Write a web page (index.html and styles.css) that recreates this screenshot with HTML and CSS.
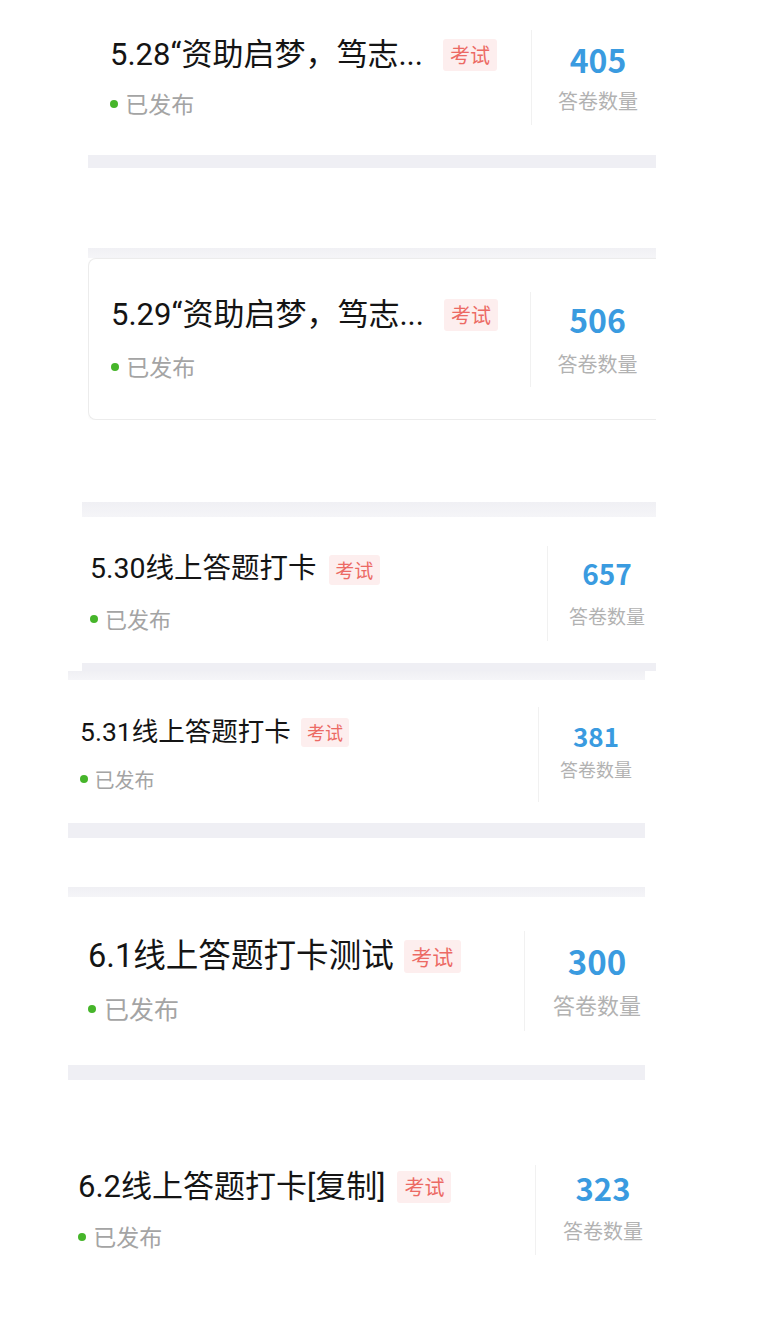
FILE: index.html
```html
<!DOCTYPE html>
<html lang="zh-CN">
<head>
    <meta charset="UTF-8">
    <meta name="viewport" content="width=device-width, initial-scale=1.0">
    <title>答卷统计</title>
    <link rel="stylesheet" href="styles.css">
</head>
<body>
    <main class="collage">
        <!-- 5.28 -->
        <section class="shot shot-1">
            <div class="card">
                <div class="info">
                    <div class="title-row">
                        <span class="title">5.28“资助启梦，笃志...</span>
                        <span class="tag">考试</span>
                    </div>
                    <div class="status"><i class="dot"></i>已发布</div>
                </div>
                <div class="stat">
                    <div class="stat-num">405</div>
                    <div class="stat-label">答卷数量</div>
                </div>
            </div>
            <div class="bar bar-bottom"></div>
        </section>

        <!-- 5.29 -->
        <section class="shot shot-2">
            <div class="bar bar-top"></div>
            <div class="card card-framed">
                <div class="info">
                    <div class="title-row">
                        <span class="title">5.29“资助启梦，笃志...</span>
                        <span class="tag">考试</span>
                    </div>
                    <div class="status"><i class="dot"></i>已发布</div>
                </div>
                <div class="stat">
                    <div class="stat-num">506</div>
                    <div class="stat-label">答卷数量</div>
                </div>
            </div>
        </section>

        <!-- 5.30 -->
        <section class="shot shot-3">
            <div class="bar bar-top"></div>
            <div class="card">
                <div class="info">
                    <div class="title-row">
                        <span class="title">5.30线上答题打卡</span>
                        <span class="tag">考试</span>
                    </div>
                    <div class="status"><i class="dot"></i>已发布</div>
                </div>
                <div class="stat">
                    <div class="stat-num">657</div>
                    <div class="stat-label">答卷数量</div>
                </div>
            </div>
            <div class="bar bar-bottom"></div>
        </section>

        <!-- 5.31 -->
        <section class="shot shot-4">
            <div class="bar bar-top"></div>
            <div class="card">
                <div class="info">
                    <div class="title-row">
                        <span class="title">5.31线上答题打卡</span>
                        <span class="tag">考试</span>
                    </div>
                    <div class="status"><i class="dot"></i>已发布</div>
                </div>
                <div class="stat">
                    <div class="stat-num">381</div>
                    <div class="stat-label">答卷数量</div>
                </div>
            </div>
            <div class="bar bar-bottom"></div>
        </section>

        <!-- 6.1 -->
        <section class="shot shot-5">
            <div class="bar bar-top"></div>
            <div class="card">
                <div class="info">
                    <div class="title-row">
                        <span class="title">6.1线上答题打卡测试</span>
                        <span class="tag">考试</span>
                    </div>
                    <div class="status"><i class="dot"></i>已发布</div>
                </div>
                <div class="stat">
                    <div class="stat-num">300</div>
                    <div class="stat-label">答卷数量</div>
                </div>
            </div>
            <div class="bar bar-bottom"></div>
        </section>

        <!-- 6.2 -->
        <section class="shot shot-6">
            <div class="card">
                <div class="info">
                    <div class="title-row">
                        <span class="title">6.2线上答题打卡[复制]</span>
                        <span class="tag">考试</span>
                    </div>
                    <div class="status"><i class="dot"></i>已发布</div>
                </div>
                <div class="stat">
                    <div class="stat-num">323</div>
                    <div class="stat-label">答卷数量</div>
                </div>
            </div>
        </section>
    </main>
</body>
</html>
```

FILE: styles.css
```css
* {
    margin: 0;
    padding: 0;
    box-sizing: border-box;
}

body {
    background: #ffffff;
    color: #1c1c1c;
    font-family: "Noto Sans CJK SC", "Noto Sans", sans-serif;
    width: 764px;
    min-height: 1343px;
    overflow: hidden;
}

.collage {
    display: flex;
    flex-direction: column;
}

/* Each screenshot strip has its own crop and scale */
.shot {
    margin-left: var(--left);
    width: var(--width);
    overflow: hidden;
}

.card {
    display: flex;
    align-items: center;
    height: var(--card-h);
    padding-left: var(--pad);
    padding-top: var(--pt, 0px);
    padding-bottom: var(--pb, 0px);
    background: #ffffff;
}

.card-framed {
    border: 1px solid #ececec;
    border-right: none;
    border-radius: 8px 0 0 8px;
    box-shadow: 0 1px 3px rgba(0, 0, 0, 0.04);
}

.info {
    flex: 1;
    display: flex;
    flex-direction: column;
    gap: var(--gap);
}

.title-row {
    display: flex;
    align-items: center;
    gap: var(--tag-gap);
}

.title {
    font-family: Roboto, "Noto Sans CJK SC", sans-serif;
    font-size: var(--title);
    line-height: 1.15;
    color: #141414;
    white-space: nowrap;
}

.tag {
    font-size: var(--tag);
    line-height: 1.6;
    padding: 0 0.35em;
    color: #ec6a64;
    background: #fdeeee;
    border-radius: 3px;
}

.status {
    display: flex;
    align-items: center;
    gap: 0.32em;
    font-size: var(--status);
    line-height: 1.25;
    color: #a4a4a4;
}

.dot {
    width: 8px;
    height: 8px;
    border-radius: 50%;
    background: #46b52a;
}

.stat {
    width: var(--stat-w);
    height: var(--div-h);
    padding-left: var(--stat-pad);
    padding-bottom: var(--stat-pb, 0px);
    border-left: 1px solid #f1f1f1;
    display: flex;
    flex-direction: column;
    align-items: center;
    justify-content: center;
    gap: var(--stat-gap);
}

.stat-num {
    font-size: var(--num);
    font-weight: bold;
    line-height: 1.1;
    color: #3a9be0;
}

.stat-label {
    font-size: var(--label);
    line-height: 1.2;
    color: #b2b2b2;
}

.bar {
    background: #efeff4;
}

.bar-top {
    height: var(--bar-top);
    background: linear-gradient(180deg, #f0f0f4, #f5f5f8);
}

.bar-bottom {
    height: var(--bar-bottom);
}

/* Strip settings */
.shot-1 {
    --left: 88px; --width: 568px; --card-h: 155px; --pad: 22px; --bar-bottom: 13px;
    --title: 31px; --tag: 20px; --tag-gap: 20px; --status: 23px; --gap: 17px;
    --num: 32px; --label: 20px; --stat-w: 125px; --stat-pad: 8px; --div-h: 95px; --stat-gap: 12px;
}

.shot-2 {
    --left: 88px; --width: 568px; --card-h: 162px; --pad: 22px; --bar-top: 10px;
    --title: 31px; --tag: 20px; --tag-gap: 20px; --status: 23px; --gap: 20px;
    --num: 32px; --label: 20px; --stat-w: 126px; --stat-pad: 8px; --div-h: 95px; --stat-gap: 14px;
    margin-top: 80px;
}

.shot-3 {
    --left: 82px; --width: 574px; --card-h: 146px; --pad: 8px; --bar-top: 15px; --bar-bottom: 8px;
    --title: 28.5px; --tag: 19px; --tag-gap: 12px; --status: 22px; --gap: 19px;
    --num: 28px; --label: 19px; --stat-w: 109px; --stat-pad: 10px; --div-h: 95px; --stat-gap: 16px;
    --pt: 6px;
    margin-top: 82px;
}

.shot-4 {
    --left: 68px; --width: 577px; --card-h: 143px; --pad: 12px; --bar-top: 9px; --bar-bottom: 15px;
    --title: 26.5px; --tag: 18px; --tag-gap: 10px; --status: 20px; --gap: 19px;
    --num: 26px; --label: 18px; --stat-w: 107px; --stat-pad: 8px; --div-h: 95px; --stat-gap: 8px;
    --pt: 6px; --stat-pb: 6px;
}

.shot-5 {
    --left: 68px; --width: 577px; --card-h: 168px; --pad: 20px; --bar-top: 10px; --bar-bottom: 15px;
    --title: 32.6px; --tag: 21px; --tag-gap: 10px; --status: 25px; --gap: 18px;
    --num: 33px; --label: 22px; --stat-w: 121px; --stat-pad: 24px; --div-h: 100px; --stat-gap: 12px;
    --stat-pb: 2px;
    margin-top: 49px;
}

.shot-6 {
    --left: 60px; --width: 600px; --card-h: 180px; --pad: 18px;
    --title: 31px; --tag: 20px; --tag-gap: 12px; --status: 23px; --gap: 18px;
    --num: 31px; --label: 20px; --stat-w: 125px; --stat-pad: 10px; --div-h: 90px; --stat-gap: 14px;
    --stat-pb: 6px;
    margin-top: 40px;
}
```
